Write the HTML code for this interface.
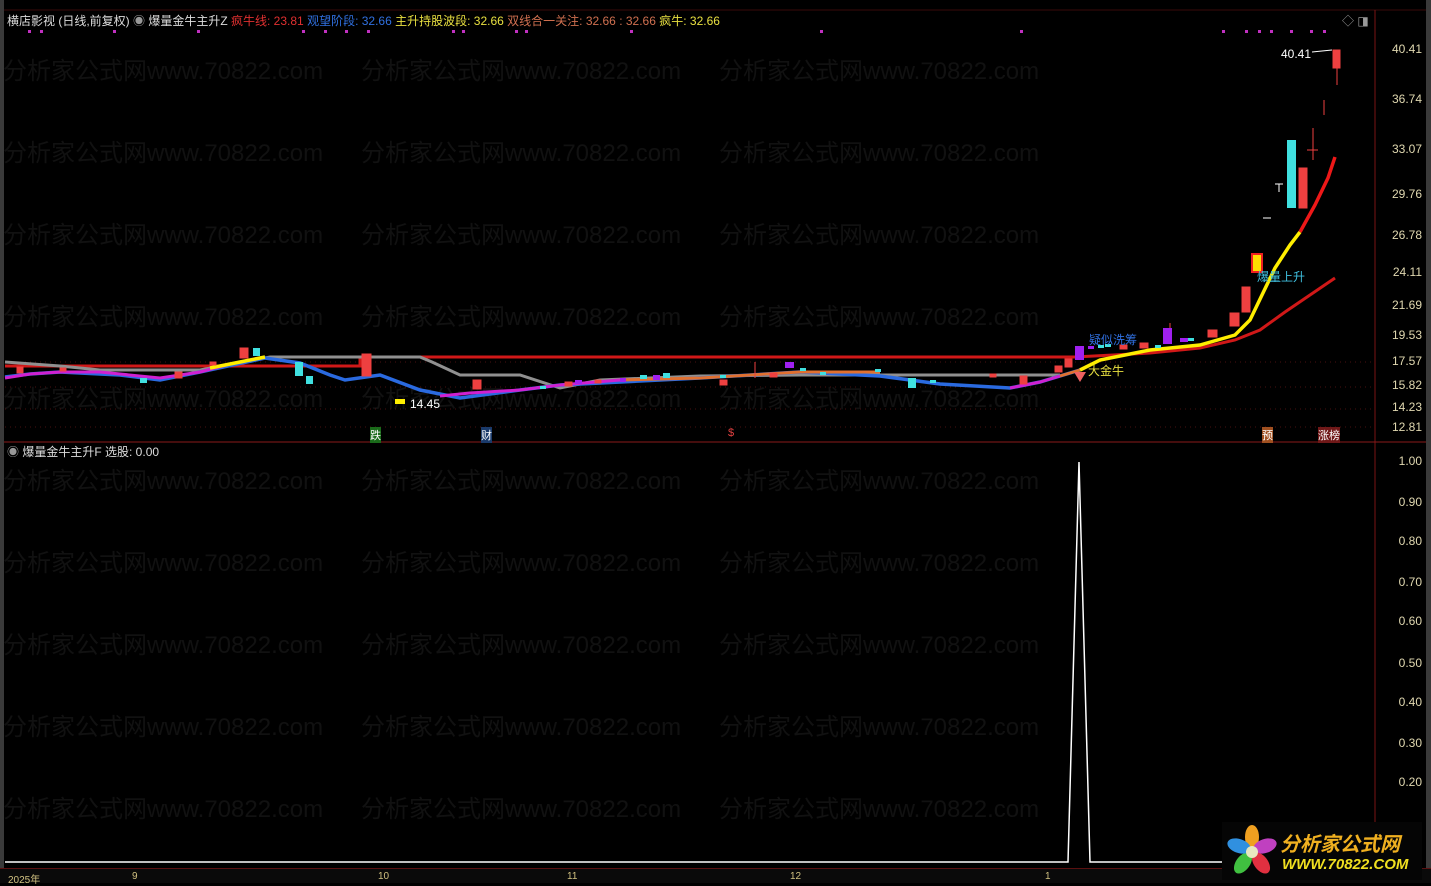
<!DOCTYPE html>
<html><head><meta charset="utf-8"><style>
html,body{margin:0;padding:0;background:#000;width:1431px;height:882px;overflow:hidden;font-family:"Liberation Sans","Noto Sans CJK SC",sans-serif}
.t{position:absolute;font-size:12px;white-space:nowrap}
.ax{position:absolute;left:1382px;width:40px;text-align:right;font-size:12px;color:#e0d8b0}
.wm{position:absolute;font-size:24px;color:#111;white-space:nowrap}
</style></head><body>
<div style="position:absolute;left:0;top:0;width:4px;height:882px;background:#3a3a3a"></div>
<div style="position:absolute;left:1426px;top:0;width:5px;height:882px;background:#3a3a3a"></div>
<div style="position:absolute;left:0;top:868px;width:1431px;height:14px;background:#0a0a0a;border-top:1px solid #5a1010"></div>
<div class="wm" style="left:3px;top:51px">分析家公式网www.70822.com</div><div class="wm" style="left:361px;top:51px">分析家公式网www.70822.com</div><div class="wm" style="left:719px;top:51px">分析家公式网www.70822.com</div>
<div class="wm" style="left:3px;top:133px">分析家公式网www.70822.com</div><div class="wm" style="left:361px;top:133px">分析家公式网www.70822.com</div><div class="wm" style="left:719px;top:133px">分析家公式网www.70822.com</div>
<div class="wm" style="left:3px;top:215px">分析家公式网www.70822.com</div><div class="wm" style="left:361px;top:215px">分析家公式网www.70822.com</div><div class="wm" style="left:719px;top:215px">分析家公式网www.70822.com</div>
<div class="wm" style="left:3px;top:297px">分析家公式网www.70822.com</div><div class="wm" style="left:361px;top:297px">分析家公式网www.70822.com</div><div class="wm" style="left:719px;top:297px">分析家公式网www.70822.com</div>
<div class="wm" style="left:3px;top:379px">分析家公式网www.70822.com</div><div class="wm" style="left:361px;top:379px">分析家公式网www.70822.com</div><div class="wm" style="left:719px;top:379px">分析家公式网www.70822.com</div>
<div class="wm" style="left:3px;top:461px">分析家公式网www.70822.com</div><div class="wm" style="left:361px;top:461px">分析家公式网www.70822.com</div><div class="wm" style="left:719px;top:461px">分析家公式网www.70822.com</div>
<div class="wm" style="left:3px;top:543px">分析家公式网www.70822.com</div><div class="wm" style="left:361px;top:543px">分析家公式网www.70822.com</div><div class="wm" style="left:719px;top:543px">分析家公式网www.70822.com</div>
<div class="wm" style="left:3px;top:625px">分析家公式网www.70822.com</div><div class="wm" style="left:361px;top:625px">分析家公式网www.70822.com</div><div class="wm" style="left:719px;top:625px">分析家公式网www.70822.com</div>
<div class="wm" style="left:3px;top:707px">分析家公式网www.70822.com</div><div class="wm" style="left:361px;top:707px">分析家公式网www.70822.com</div><div class="wm" style="left:719px;top:707px">分析家公式网www.70822.com</div>
<div class="wm" style="left:3px;top:789px">分析家公式网www.70822.com</div><div class="wm" style="left:361px;top:789px">分析家公式网www.70822.com</div><div class="wm" style="left:719px;top:789px">分析家公式网www.70822.com</div>

<svg width="1431" height="882" style="position:absolute;left:0;top:0">
<line x1="4" y1="10" x2="1426" y2="10" stroke="#3a0a0a"/>
<line x1="1375" y1="10" x2="1375" y2="868" stroke="#7a1515"/>
<line x1="4" y1="442" x2="1426" y2="442" stroke="#8a1a1a"/>
<g stroke="#4a1010" stroke-dasharray="1,4">
<line x1="5" y1="362" x2="1375" y2="362"/><line x1="5" y1="387" x2="1375" y2="387"/><line x1="5" y1="409" x2="1375" y2="409"/><line x1="5" y1="427" x2="1375" y2="427"/>
</g>
<g fill="#c030c0"><rect x="28" y="30" width="3" height="3"/><rect x="40" y="30" width="3" height="3"/><rect x="113" y="30" width="3" height="3"/><rect x="197" y="30" width="3" height="3"/><rect x="302" y="30" width="3" height="3"/><rect x="324" y="30" width="3" height="3"/><rect x="345" y="30" width="3" height="3"/><rect x="367" y="30" width="3" height="3"/><rect x="452" y="30" width="3" height="3"/><rect x="462" y="30" width="3" height="3"/><rect x="515" y="30" width="3" height="3"/><rect x="525" y="30" width="3" height="3"/><rect x="630" y="30" width="3" height="3"/><rect x="820" y="30" width="3" height="3"/><rect x="1020" y="30" width="3" height="3"/><rect x="1222" y="30" width="3" height="3"/><rect x="1245" y="30" width="3" height="3"/><rect x="1258" y="30" width="3" height="3"/><rect x="1270" y="30" width="3" height="3"/><rect x="1290" y="30" width="3" height="3"/><rect x="1310" y="30" width="3" height="3"/><rect x="1323" y="30" width="3" height="3"/></g>
<polyline fill="none" stroke="#d01818" stroke-width="3" points="5,366 360,366 360,357 1075,357 1150,353 1200,348 1235,340 1260,330 1285,312 1310,295 1335,278"/>
<polyline fill="none" stroke="#909090" stroke-width="3" points="5,362 60,366 100,370 200,370 270,357 420,357 432,362 460,375 520,375 560,388 600,380 700,376 800,375 1000,375 1060,375"/>
<polyline fill="none" stroke="#2a6ae0" stroke-width="3.5" points="5,377 30,374 60,372 120,375 160,380 200,372 265,358 300,363 330,375 345,380 380,375 420,390 460,398 520,390 560,385 700,378 800,372 880,376 940,384 1010,388 1040,382 1080,370"/>
<polyline fill="none" stroke="#d020d0" stroke-width="3" points="5,378 30,374 60,372 100,372 160,378 200,372 230,364 260,358"/>
<polyline fill="none" stroke="#d020d0" stroke-width="3" points="440,396 470,393 520,390 560,385 620,380"/>
<polyline fill="none" stroke="#d020d0" stroke-width="3" points="1010,388 1040,382 1060,376"/>
<polyline fill="none" stroke="#e07030" stroke-width="3" points="620,380 700,378 800,372 880,372"/>
<polyline fill="none" stroke="#e07030" stroke-width="3" points="1060,376 1080,370"/>
<polyline fill="none" stroke="#ffee00" stroke-width="3.5" points="210,368 240,362 265,357"/>
<polyline fill="none" stroke="#ffee00" stroke-width="3.5" points="1080,370 1100,360 1150,350 1200,345 1235,335 1250,320 1262,295 1275,268 1290,245 1300,232"/>
<polyline fill="none" stroke="#ee1818" stroke-width="3.5" points="1300,232 1315,205 1328,178 1335,157"/>
<g fill="#ee4040" stroke="#ee4040">
<rect x="17" y="367" width="6" height="6"/><rect x="175" y="372" width="7" height="6"/><rect x="240" y="348" width="8" height="10"/><rect x="362" y="354" width="9" height="22"/><rect x="473" y="380" width="8" height="9"/><rect x="565" y="382" width="7" height="4"/><rect x="720" y="380" width="7" height="5"/><rect x="770" y="373" width="7" height="4"/><rect x="1020" y="376" width="7" height="8"/><rect x="1055" y="366" width="7" height="6"/><rect x="1065" y="359" width="7" height="8"/><rect x="1120" y="345" width="7" height="4"/><rect x="1140" y="343" width="8" height="5"/><rect x="1208" y="330" width="9" height="7"/><rect x="1230" y="313" width="9" height="13"/><rect x="1242" y="287" width="8" height="25"/><rect x="1299" y="168" width="8" height="40"/><rect x="1333" y="50" width="7" height="18"/><rect x="60" y="368" width="6" height="3"/><rect x="210" y="362" width="6" height="3"/><rect x="595" y="380" width="6" height="3"/><rect x="990" y="374" width="6" height="3"/>
<line x1="1313" y1="128" x2="1313" y2="160"/><line x1="1307" y1="150" x2="1318" y2="150"/><line x1="1324" y1="100" x2="1324" y2="115"/><line x1="1337" y1="68" x2="1337" y2="85"/><line x1="755" y1="362" x2="755" y2="378"/><line x1="1170" y1="323" x2="1170" y2="330"/>
</g>
<g fill="#40e0e0">
<rect x="253" y="348" width="7" height="8"/><rect x="295" y="362" width="8" height="14"/><rect x="306" y="376" width="7" height="8"/><rect x="140" y="378" width="7" height="5"/><rect x="908" y="378" width="8" height="10"/><rect x="1287" y="140" width="9" height="68"/><rect x="1098" y="345" width="6" height="3"/><rect x="640" y="375" width="7" height="4"/><rect x="663" y="373" width="7" height="5"/><rect x="720" y="375" width="6" height="3"/><rect x="800" y="368" width="6" height="3"/><rect x="820" y="372" width="6" height="3"/><rect x="875" y="369" width="6" height="3"/><rect x="930" y="380" width="6" height="3"/><rect x="1155" y="345" width="6" height="3"/><rect x="1188" y="338" width="6" height="3"/><rect x="1105" y="344" width="6" height="3"/><rect x="540" y="386" width="6" height="3"/></g>
<g fill="#a020f0"><rect x="1075" y="346" width="9" height="14"/><rect x="1163" y="328" width="9" height="16"/><rect x="1180" y="338" width="8" height="4"/><rect x="575" y="380" width="7" height="4"/><rect x="620" y="378" width="6" height="4"/><rect x="653" y="375" width="7" height="5"/><rect x="785" y="362" width="9" height="6"/><rect x="1088" y="346" width="6" height="3"/></g>
<rect x="1252" y="254" width="10" height="18" fill="#ffdd00" stroke="#ee2020" stroke-width="2"/>
<rect x="395" y="399" width="10" height="5" fill="#ffee00"/>
<polygon points="1074,372 1086,372 1080,382" fill="#ee6060"/>
<line x1="1275" y1="184" x2="1283" y2="184" stroke="#fff"/><line x1="1279" y1="184" x2="1279" y2="192" stroke="#fff"/><line x1="1263" y1="218" x2="1271" y2="218" stroke="#fff"/>
<line x1="1312" y1="52" x2="1332" y2="50" stroke="#fff"/>
<polyline fill="none" stroke="#fff" stroke-width="1.5" points="5,862 1068,862 1079,462 1090,862 1222,862"/>
</svg>

<div class="t" style="left:7px;top:12px;color:#ddd">横店影视 (日线,前复权) <span style="color:#999">◉</span> 爆量金牛主升Z <span style="color:#e03030">疯牛线: 23.81</span> <span style="color:#3070e0">观望阶段: 32.66</span> <span style="color:#e8e040">主升持股波段: 32.66</span> <span style="color:#d07050">双线合一关注: 32.66 : 32.66</span> <span style="color:#e8e040">疯牛: 32.66</span></div>
<div class="t" style="left:1342px;top:12px;color:#999">◇ ◨</div>
<div class="t" style="left:7px;top:443px;color:#ddd"><span style="color:#999">◉</span> 爆量金牛主升F 选股: 0.00</div>
<div class="t" style="left:1281px;top:47px;color:#fff">40.41</div>
<div class="t" style="left:410px;top:397px;color:#fff">14.45</div>
<div class="t" style="left:1089px;top:331px;color:#3070e0">疑似洗筹</div>
<div class="t" style="left:1088px;top:362px;color:#e8e040">大金牛</div>
<div class="t" style="left:1257px;top:268px;color:#40c0e0">爆量上升</div>
<div class="t" style="left:370px;top:427px;color:#fff;background:#1a6a1a;font-size:11px">跌</div>
<div class="t" style="left:481px;top:427px;color:#fff;background:#1a3a6a;font-size:11px">财</div>
<div class="t" style="left:728px;top:427px;color:#e04040;font-size:11px">$</div>
<div class="t" style="left:1262px;top:427px;color:#fff;background:#a05020;font-size:11px">预</div>
<div class="t" style="left:1318px;top:427px;color:#fff;background:#701818;font-size:11px">涨榜</div>
<div class="ax" style="top:42px">40.41</div><div class="ax" style="top:92px">36.74</div><div class="ax" style="top:142px">33.07</div><div class="ax" style="top:187px">29.76</div><div class="ax" style="top:228px">26.78</div><div class="ax" style="top:265px">24.11</div><div class="ax" style="top:298px">21.69</div><div class="ax" style="top:328px">19.53</div><div class="ax" style="top:354px">17.57</div><div class="ax" style="top:378px">15.82</div><div class="ax" style="top:400px">14.23</div><div class="ax" style="top:420px">12.81</div>
<div class="ax" style="top:454px">1.00</div><div class="ax" style="top:495px">0.90</div><div class="ax" style="top:534px">0.80</div><div class="ax" style="top:575px">0.70</div><div class="ax" style="top:614px">0.60</div><div class="ax" style="top:656px">0.50</div><div class="ax" style="top:695px">0.40</div><div class="ax" style="top:736px">0.30</div><div class="ax" style="top:775px">0.20</div>
<div class="t" style="left:8px;top:871px;color:#d0c080;font-size:10px">2025年</div>
<div class="t" style="left:132px;top:871px;color:#d0c080;font-size:10px">9</div>
<div class="t" style="left:378px;top:871px;color:#d0c080;font-size:10px">10</div>
<div class="t" style="left:567px;top:871px;color:#d0c080;font-size:10px">11</div>
<div class="t" style="left:790px;top:871px;color:#d0c080;font-size:10px">12</div>
<div class="t" style="left:1045px;top:871px;color:#d0c080;font-size:10px">1</div>
<div style="position:absolute;left:1222px;top:822px;width:200px;height:58px;background:#050505">
<svg width="56" height="56" style="position:absolute;left:2px;top:2px">
<ellipse cx="28" cy="13" rx="7" ry="12" fill="#f0a020"/>
<ellipse cx="41" cy="22" rx="7" ry="12" fill="#c040c0" transform="rotate(72 41 22)"/>
<ellipse cx="37" cy="39" rx="7" ry="12" fill="#e03040" transform="rotate(144 37 39)"/>
<ellipse cx="19" cy="39" rx="7" ry="12" fill="#40c040" transform="rotate(216 19 39)"/>
<ellipse cx="15" cy="22" rx="7" ry="12" fill="#3090e0" transform="rotate(288 15 22)"/>
<circle cx="28" cy="28" r="6" fill="#e8e8c0"/>
</svg>
<div style="position:absolute;left:58px;top:6px;font-size:20px;font-weight:bold;color:#f0b020;font-style:italic">分析家公式网</div>
<div style="position:absolute;left:60px;top:34px;font-size:15px;font-weight:bold;color:#f0e020;font-style:italic">WWW.70822.COM</div>
</div>
</body></html>
